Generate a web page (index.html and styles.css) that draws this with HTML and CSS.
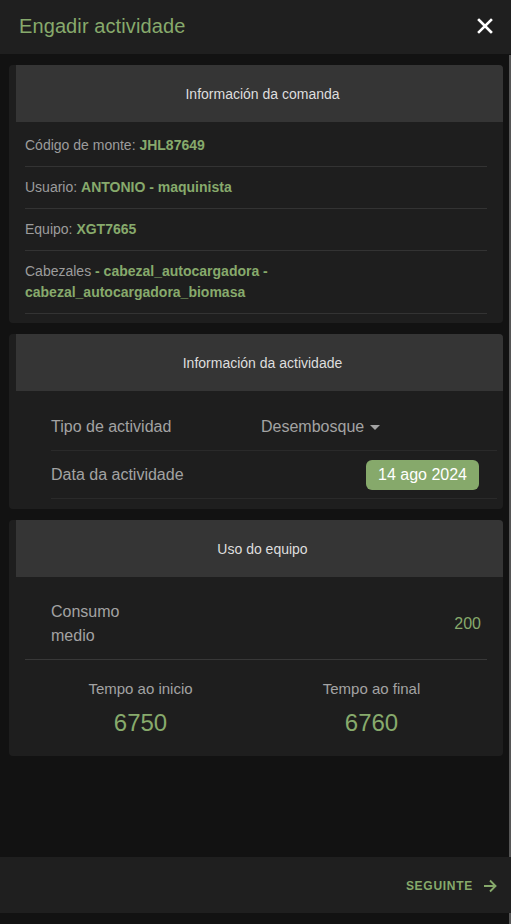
FILE: index.html
```html
<!DOCTYPE html>
<html lang="gl">
<head>
<meta charset="utf-8">
<title>Engadir actividade</title>
<link rel="stylesheet" href="styles.css">
</head>
<body>
<div class="app">
  <header class="topbar">
    <h1 class="title">Engadir actividade</h1>
    <button class="close" aria-label="Pechar">
      <svg width="16" height="16" viewBox="0 0 16 16"><path d="M2 2 L14 14 M14 2 L2 14" stroke="#fff" stroke-width="2.6" stroke-linecap="square"/></svg>
    </button>
  </header>

  <main class="content">
    <section class="card">
      <div class="card-head">Información da comanda</div>
      <div class="card-body info">
        <div class="info-row">Código de monte: <b>JHL87649</b></div>
        <div class="info-row">Usuario: <b>ANTONIO - maquinista</b></div>
        <div class="info-row">Equipo: <b>XGT7665</b></div>
        <div class="info-row">Cabezales <b>- cabezal_autocargadora -<br>cabezal_autocargadora_biomasa</b></div>
      </div>
    </section>

    <section class="card">
      <div class="card-head">Información da actividade</div>
      <div class="card-body act">
        <div class="act-row">
          <span class="label">Tipo de actividad</span>
          <span class="select">Desembosque <span class="caret"></span></span>
        </div>
        <div class="act-row">
          <span class="label">Data da actividade</span>
          <span class="chip">14 ago 2024</span>
        </div>
      </div>
    </section>

    <section class="card">
      <div class="card-head">Uso do equipo</div>
      <div class="card-body uso">
        <div class="uso-row">
          <span class="label narrow">Consumo medio</span>
          <span class="value">200</span>
        </div>
        <div class="tempos">
          <div class="tempo">
            <span class="tempo-label">Tempo ao inicio</span>
            <span class="tempo-num">6750</span>
          </div>
          <div class="tempo">
            <span class="tempo-label">Tempo ao final</span>
            <span class="tempo-num">6760</span>
          </div>
        </div>
      </div>
    </section>
  </main>

  <footer class="footer">
    <button class="next">SEGUINTE
      <svg width="14" height="14" viewBox="0 0 14 14"><path d="M1 7 H12.5 M7 1.5 L12.5 7 L7 12.5" fill="none" stroke="#86a96b" stroke-width="1.9"/></svg>
    </button>
  </footer>
  <div class="bottom-space"></div>
  <div class="scrollbar"></div>
</div>
</body>
</html>
```

FILE: styles.css
```css
* { box-sizing: border-box; }
html, body { margin: 0; padding: 0; }
body {
  background: #121212;
  font-family: "Liberation Sans", Arial, sans-serif;
  color: #a3a3a3;
}
.app {
  position: relative;
  width: 511px;
  height: 924px;
  display: flex;
  flex-direction: column;
  overflow: hidden;
}
.topbar {
  height: 54px;
  flex: none;
  background: #1f1f1f;
  display: flex;
  align-items: center;
  justify-content: space-between;
  padding: 0 18px 2px 19px;
}
.title {
  margin: 0;
  font-size: 20px;
  font-weight: normal;
  color: #87aa6c;
  letter-spacing: 0.1px;
}
.close {
  background: none;
  border: 0;
  padding: 0;
  width: 17px;
  height: 17px;
  display: flex;
  align-items: center;
  justify-content: center;
}
.content {
  flex: 1;
  padding: 11px 8px 0 9px;
  display: flex;
  flex-direction: column;
  gap: 11px;
}
.card {
  background: #1e1e1e;
  border-radius: 4px;
  overflow: hidden;
  width: 494px;
}
.card-head {
  margin-left: 7px;
  padding-left: 6px;
  height: 57px;
  background: #353535;
  display: flex;
  align-items: center;
  justify-content: center;
  font-size: 14px;
  color: #dedede;
}
.info {
  padding: 3px 16px 9px 16px;
}
.info-row {
  font-size: 14px;
  line-height: 21px;
  padding: 10px 0 10px;
  border-bottom: 1px solid #333;
  color: #9c9c9c;
}
.info-row b { color: #87aa6c; }

.act {
  padding: 12px 6px 10px 42px;
}
.act-row {
  height: 48px;
  display: grid;
  grid-template-columns: 210px 1fr;
  align-items: center;
  border-bottom: 1px solid #2a2a2a;
  padding-right: 18px;
}
.label {
  font-size: 16px;
  color: #a3a3a3;
}
.select {
  font-size: 16px;
  color: #a3a3a3;
  display: flex;
  align-items: center;
  gap: 6px;
}
.caret {
  width: 0;
  height: 0;
  border-left: 5px solid transparent;
  border-right: 5px solid transparent;
  border-top: 5px solid #a3a3a3;
  margin-top: 1px;
}
.chip {
  justify-self: end;
  background: #86a96b;
  color: #fff;
  font-size: 16px;
  height: 30px;
  border-radius: 6px;
  padding: 0 12px;
  display: flex;
  align-items: center;
}

.uso {
  padding: 0 16px 0 16px;
}
.uso-row {
  height: 83px;
  display: flex;
  align-items: center;
  justify-content: space-between;
  padding: 11px 6px 0 26px;
  border-bottom: 1px solid #383838;
}
.narrow {
  width: 90px;
  line-height: 24px;
}
.value {
  font-size: 16px;
  color: #87aa6c;
}
.tempos {
  display: grid;
  grid-template-columns: 1fr 1fr;
  padding: 18px 0 19px;
}
.tempo {
  display: flex;
  flex-direction: column;
  align-items: center;
  gap: 9px;
}
.tempo-label {
  font-size: 15px;
  line-height: 22px;
  color: #a3a3a3;
}
.tempo-num {
  font-size: 24px;
  line-height: 28px;
  color: #87aa6c;
}

.footer {
  position: relative;
  z-index: 2;
  height: 56px;
  flex: none;
  background: #1f1f1f;
  display: flex;
  align-items: center;
  justify-content: flex-end;
  padding: 2px 14px 0 0;
}
.next {
  background: none;
  border: 0;
  padding: 0;
  font-family: "Liberation Sans", Arial, sans-serif;
  font-weight: bold;
  font-size: 12px;
  letter-spacing: 0.06em;
  color: #86a96b;
  display: flex;
  align-items: center;
  gap: 10px;
}
.bottom-space {
  height: 11px;
  flex: none;
}
.scrollbar {
  position: absolute;
  top: 55px;
  right: 0;
  bottom: 0;
  width: 2px;
  background: #555;
}
```
